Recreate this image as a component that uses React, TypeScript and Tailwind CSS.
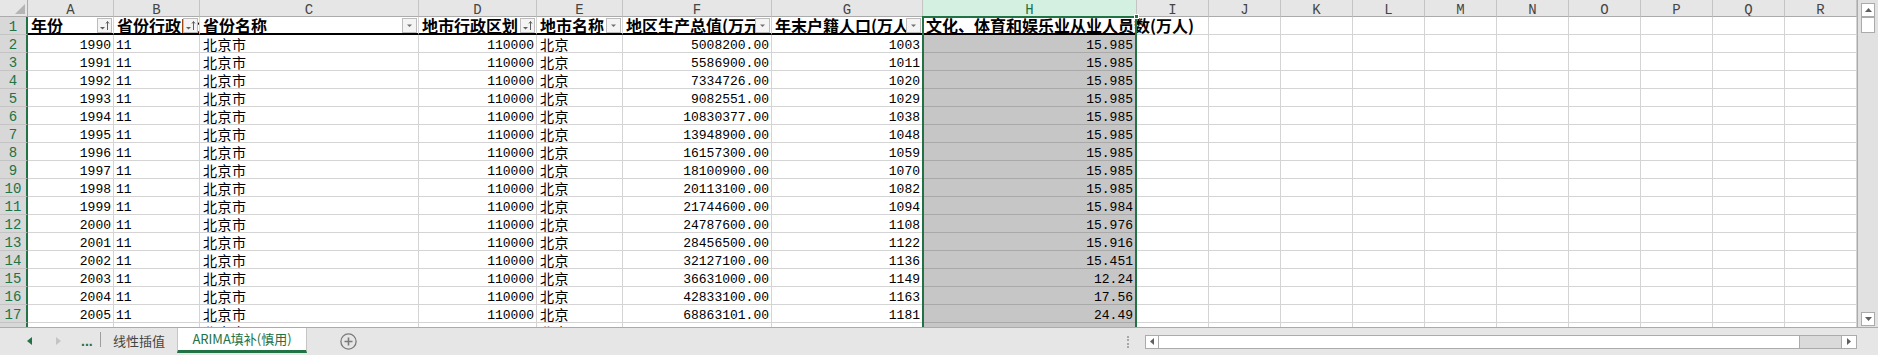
import React from 'react';

type Col = { w: string; letter: string };

const cols: Col[] = [
  { w: 'w-[86px]', letter: 'A' },
  { w: 'w-[86px]', letter: 'B' },
  { w: 'w-[219px]', letter: 'C' },
  { w: 'w-[118px]', letter: 'D' },
  { w: 'w-[86px]', letter: 'E' },
  { w: 'w-[149px]', letter: 'F' },
  { w: 'w-[151px]', letter: 'G' },
  { w: 'w-[214px]', letter: 'H' },
  ...['I', 'J', 'K', 'L', 'M', 'N', 'O', 'P', 'Q', 'R'].map((l) => ({ w: 'w-[72px]', letter: l })),
];

const heads: { t: string; f: 'sort' | 'down' | null }[] = [
  { t: '年份', f: 'sort' },
  { t: '省份行政区划', f: 'sort' },
  { t: '省份名称', f: 'down' },
  { t: '地市行政区划', f: 'sort' },
  { t: '地市名称', f: 'down' },
  { t: '地区生产总值(万元)', f: 'down' },
  { t: '年末户籍人口(万人)', f: 'down' },
  { t: '文化、体育和娱乐业从业人员数(万人)', f: null },
];

// year, gdp, population, H
const data = [
  ['1990', '5008200.00', '1003', '15.985'],
  ['1991', '5586900.00', '1011', '15.985'],
  ['1992', '7334726.00', '1020', '15.985'],
  ['1993', '9082551.00', '1029', '15.985'],
  ['1994', '10830377.00', '1038', '15.985'],
  ['1995', '13948900.00', '1048', '15.985'],
  ['1996', '16157300.00', '1059', '15.985'],
  ['1997', '18100900.00', '1070', '15.985'],
  ['1998', '20113100.00', '1082', '15.985'],
  ['1999', '21744600.00', '1094', '15.984'],
  ['2000', '24787600.00', '1108', '15.976'],
  ['2001', '28456500.00', '1122', '15.916'],
  ['2002', '32127100.00', '1136', '15.451'],
  ['2003', '36631000.00', '1149', '12.24'],
  ['2004', '42833100.00', '1163', '17.56'],
  ['2005', '68863101.00', '1181', '24.49'],
];

const base = 'shrink-0 h-[18px] border-r border-b border-r-[#d4d4d4] overflow-hidden whitespace-nowrap text-black';
const num = "font-['Liberation_Mono',monospace] text-[13px] leading-[12px] pt-[5px]";
const cjk = "font-['Noto_Sans_CJK_SC',sans-serif] text-[14px] tracking-[0.5px] leading-[16px] pt-[1px] pl-[3px]";

function FilterBtn({ sorted }: { sorted: boolean }) {
  return (
    <div className="absolute right-[1px] top-[1px] w-[15px] h-[15px] border border-[#bcbcbc] bg-[#f4f4f4] flex items-center justify-center">
      <svg width="13" height="13" viewBox="0 0 13 13">
        {sorted ? (
          <>
            <path d="M2 8h5l-2.5 2.5z" fill="#5f5f5f" />
            <path d="M9.5 2.5v8.5M8 4.5l1.5-2 1.5 2" stroke="#5f5f5f" strokeWidth="1" fill="none" />
          </>
        ) : (
          <path d="M4 5.5h5l-2.5 2.5z" fill="#6f6f6f" />
        )}
      </svg>
    </div>
  );
}

function RowHead({ n }: { n?: number }) {
  return (
    <div className="w-[28px] shrink-0 h-[18px] bg-[#d8d8d8] border-r-2 border-r-[#217346] border-b border-b-[#c4c4c4] text-center text-[#217346] font-['Liberation_Mono',monospace] text-[14px] leading-[13px] pt-[4px] overflow-hidden">
      {n}
    </div>
  );
}

function DataRow({ n, r }: { n: number; r: string[] }) {
  const [year, gdp, pop, h] = r;
  return (
    <div className="flex">
      <RowHead n={n} />
      <div className={`${base} ${cols[0].w} border-b-[#d4d4d4] ${num} text-right pr-[2px]`}>{year}</div>
      <div className={`${base} ${cols[1].w} border-b-[#d4d4d4] ${num} pl-[2px]`}>11</div>
      <div className={`${base} ${cols[2].w} border-b-[#d4d4d4] ${cjk}`}>北京市</div>
      <div className={`${base} ${cols[3].w} border-b-[#d4d4d4] ${num} text-right pr-[2px]`}>110000</div>
      <div className={`${base} ${cols[4].w} border-b-[#d4d4d4] ${cjk}`}>北京</div>
      <div className={`${base} ${cols[5].w} border-b-[#d4d4d4] ${num} text-right pr-[2px]`}>{gdp}</div>
      <div className={`${base} ${cols[6].w} border-b-[#d4d4d4] ${num} text-right pr-[2px]`}>{pop}</div>
      <div className={`${base} ${cols[7].w} bg-[#c6c6c6] border-b-[#a9a9a9] ${num} text-right pr-[3px]`}>{h}</div>
      {cols.slice(8).map((c) => (
        <div key={c.letter} className={`${base} ${c.w} border-b-[#d4d4d4]`} />
      ))}
    </div>
  );
}

// row 18, only its top few pixels are visible above the tab bar
function PartialRow() {
  return (
    <div className="flex h-[4px] overflow-hidden">
      <div className="w-[28px] shrink-0 h-[18px] bg-[#d8d8d8] border-r-2 border-r-[#217346]" />
      {cols.map((c) => (
        <div
          key={c.letter}
          className={`shrink-0 h-[18px] border-r border-r-[#d4d4d4] overflow-hidden whitespace-nowrap ${c.w} ${
            c.letter === 'H' ? 'bg-[#c6c6c6]' : ''
          } ${c.letter === 'C' || c.letter === 'E' ? cjk : ''}`}
        >
          {c.letter === 'C' ? '北京市' : c.letter === 'E' ? '北京' : null}
        </div>
      ))}
    </div>
  );
}

export default function App() {
  return (
    <div className="w-[1878px] h-[355px] bg-white flex flex-col overflow-hidden">
      <div className="flex h-[327px] shrink-0">
        {/* sheet grid */}
        <div className="relative w-[1857px] h-[327px] overflow-hidden">
          {/* column letters */}
          <div className="flex">
            <div className="w-[28px] h-[17px] shrink-0 bg-[#e6e6e6] border-r border-b border-[#ababab] flex items-end justify-end pr-[2px] pb-[2px]">
              <svg width="10" height="10" viewBox="0 0 10 10">
                <path d="M10 0V10H0z" fill="#b4b4b4" />
              </svg>
            </div>
            {cols.map((c) => (
              <div
                key={c.letter}
                className={`${c.w} h-[17px] shrink-0 border-r border-r-[#c4c4c4] border-b border-b-[#ababab] text-center font-['Liberation_Mono',monospace] text-[14px] leading-[12px] pt-[4px] overflow-hidden ${
                  c.letter === 'H' ? 'bg-[#d3f0e0] text-[#217346]' : 'bg-[#e6e6e6] text-[#444444]'
                }`}
              >
                {c.letter}
              </div>
            ))}
          </div>

          {/* header row 1 */}
          <div className="flex">
            <RowHead n={1} />
            {heads.map((h, i) => (
              <div
                key={h.t}
                className={`relative shrink-0 h-[18px] ${cols[i].w} border-r border-r-[#d4d4d4] border-b-2 border-b-black whitespace-nowrap pl-[3px] font-['Noto_Sans_CJK_SC',sans-serif] font-bold text-[16px] leading-[16px] text-black ${
                  h.f ? 'overflow-hidden' : 'overflow-visible'
                }`}
              >
                {h.t}
                {h.f && <FilterBtn sorted={h.f === 'sort'} />}
              </div>
            ))}
            {cols.slice(8).map((c) => (
              <div key={c.letter} className={`${c.w} shrink-0 h-[18px] border-b border-b-[#d4d4d4] border-r border-r-[#d4d4d4]`} />
            ))}
          </div>

          {data.map((r, i) => (
            <DataRow key={r[0]} n={i + 2} r={r} />
          ))}
          <PartialRow />

          {/* column H selection */}
          <div className="absolute left-[922px] top-[16px] w-[215px] h-[340px] border-2 border-[#217346]" />
          <div className="absolute left-[1134px] top-[14px] w-[5px] h-[5px] bg-[#217346] border border-white" />
        </div>

        {/* vertical scrollbar */}
        <div className="w-[21px] h-[327px] bg-[#e1e1e1] border-l border-[#ababab] flex flex-col items-center pt-[3px] pb-[1px]">
          <div className="w-[14px] h-[14px] bg-white border border-[#ababab] flex items-center justify-center">
            <svg width="7" height="4" viewBox="0 0 7 4">
              <path d="M0 4L3.5 0 7 4z" fill="#606060" />
            </svg>
          </div>
          <div className="w-[14px] h-[16px] bg-white border border-[#ababab]" />
          <div className="mt-auto w-[14px] h-[14px] bg-white border border-[#ababab] flex items-center justify-center">
            <svg width="7" height="4" viewBox="0 0 7 4">
              <path d="M0 0L3.5 4 7 0z" fill="#606060" />
            </svg>
          </div>
        </div>
      </div>

      {/* sheet tabs + horizontal scrollbar */}
      <div className="h-[28px] shrink-0 border-t border-[#ababab] bg-[#e6e6e6] flex">
        <div className="w-[100px] flex items-center pb-[1px]">
          <svg className="ml-[27px]" width="5" height="8" viewBox="0 0 5 8">
            <path d="M5 0V8L0 4z" fill="#217346" />
          </svg>
          <svg className="ml-[24px]" width="5" height="8" viewBox="0 0 5 8">
            <path d="M0 0V8L5 4z" fill="#c4c4c4" />
          </svg>
          <span className="ml-[20px] font-['Liberation_Sans',sans-serif] font-bold text-[14px] leading-none text-[#217346]">...</span>
        </div>
        <div className="w-[1px] h-[15px] mt-[4px] bg-[#9e9e9e]" />
        <div className="w-[76px] h-[25px] flex items-center justify-center font-['Noto_Sans_CJK_SC',sans-serif] text-[13px] text-[#444444]">
          线性插值
        </div>
        <div className="w-[130px] h-[25px] bg-white border-x border-[#c6c6c6] border-b-[3px] border-b-[#217346] flex items-center justify-center font-['Noto_Sans_CJK_SC',sans-serif] text-[13px] text-[#217346]">
          ARIMA填补(慎用)
        </div>
        <div className="ml-[33px] flex items-center pb-[1px]">
          <svg width="17" height="17" viewBox="0 0 17 17">
            <circle cx="8.5" cy="8.5" r="7.6" fill="none" stroke="#7a7a7a" strokeWidth="1.3" />
            <path d="M8.5 4.5v8M4.5 8.5h8" stroke="#7a7a7a" strokeWidth="1.6" />
          </svg>
        </div>
        <div className="flex-1" />
        <div className="w-[18px] flex items-center">
          <div className="h-[12px] border-l-2 border-dotted border-[#a8a8a8]" />
        </div>
        <div className="w-[712px] h-[14px] self-center flex border border-[#ababab] bg-[#dadada]">
          <div className="w-[13px] h-full bg-white border-r border-[#ababab] flex items-center justify-center">
            <svg width="4" height="7" viewBox="0 0 4 7">
              <path d="M4 0V7L0 3.5z" fill="#606060" />
            </svg>
          </div>
          <div className="w-[641px] h-full bg-white border-r border-[#ababab]" />
          <div className="flex-1" />
          <div className="w-[15px] h-full bg-white border-l border-[#ababab] flex items-center justify-center">
            <svg width="4" height="7" viewBox="0 0 4 7">
              <path d="M0 0V7L4 3.5z" fill="#606060" />
            </svg>
          </div>
        </div>
        <div className="w-[21px]" />
      </div>
    </div>
  );
}
